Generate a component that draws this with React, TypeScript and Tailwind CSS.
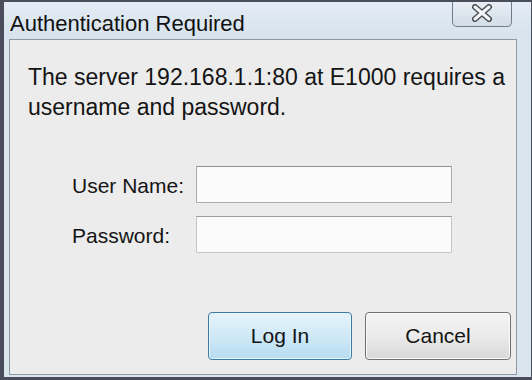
export default function App() {
  const font = { fontFamily: '"Liberation Sans", Arial, sans-serif' }
  return (
    <div
      className="w-[532px] h-[380px] overflow-hidden bg-[#dbe5ee] border-l-[4px] border-t-[2px] border-b-[3px] border-r-[1px] border-[#4a4e5c] flex flex-col text-[#141414]"
      style={font}
    >
      {/* title bar */}
      <div className="h-[37px] flex items-start bg-gradient-to-b from-[#e4ecf4] to-[#d6e2ec] relative">
        <div className="pl-[6px] pt-[9px] text-[22px] leading-[26px] text-[#111]">Authentication Required</div>
        <div className="ml-auto mr-[19px] mt-[-2px] w-[60px] h-[27px] border border-t-0 border-[#6f7c8a] rounded-b-[5px] bg-gradient-to-b from-[#e9eff5] to-[#d3dde7] flex items-center justify-center">
          <svg width="22" height="18" viewBox="0 0 22 18">
            <path d="M4 3 L18 15 M18 3 L4 15" stroke="#4b4f58" strokeWidth="6" strokeLinecap="round" />
            <path d="M4 3 L18 15 M18 3 L4 15" stroke="#f4f6f8" strokeWidth="3" strokeLinecap="round" />
          </svg>
        </div>
      </div>

      {/* content */}
      <div className="ml-[5px] mr-[14px] h-[336px] border border-[#8d99a5] bg-[#ececec] flex flex-col">
        <div className="pl-[18px] pt-[22px] text-[23px] leading-[30px]">
          <div>The server 192.168.1.1:80 at E1000 requires a</div>
          <div>username and password.</div>
        </div>

        <div className="mt-[44px] grid grid-cols-[124px_256px] gap-y-[13px] pl-[62px] text-[21px]">
          <div className="flex items-center h-[37px] pt-[3px]">User Name:</div>
          <input className="h-[37px] border border-[#a9acb2] border-t-[#8e9196] bg-[#fbfbfb] outline-none" />
          <div className="flex items-center h-[37px] pt-[3px]">Password:</div>
          <input type="password" className="h-[37px] border border-[#c4c6ca] border-t-[#9a9da2] bg-[#fbfbfb] outline-none" />
        </div>

        <div className="mt-[59px] flex justify-end gap-[13px] pr-[5px]">
          <button className="w-[144px] h-[48px] rounded-[4px] border border-[#3a7aa8] bg-gradient-to-b from-[#e6f4fc] via-[#cfe9f7] to-[#b6dcf0] text-[21px] shadow-[inset_0_0_0_1px_#e8f5fc]">
            Log In
          </button>
          <button className="w-[146px] h-[48px] rounded-[4px] border border-[#707070] bg-gradient-to-b from-[#f4f4f4] via-[#ebebeb] to-[#d8d8d8] text-[21px] shadow-[inset_0_0_0_1px_#fafafa]">
            Cancel
          </button>
        </div>
      </div>
    </div>
  )
}
